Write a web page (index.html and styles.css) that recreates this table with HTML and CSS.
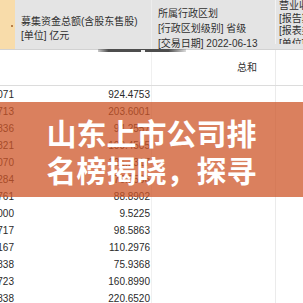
FILE: index.html
```html
<!DOCTYPE html>
<html lang="zh-CN">
<head>
<meta charset="utf-8">
<link rel="stylesheet" href="styles.css">
</head>
<body>
<div class="sheet">
  <div class="head">
    <div class="hc strip"><span class="dot"></span></div>
    <div class="hc hb">
      <div>募集资金总额(含股东售股)</div>
      <div>[单位] 亿元</div>
    </div>
    <div class="hc hcc">
      <div>所属行政区划</div>
      <div>[行政区划级别] 省级</div>
      <div>[交易日期] 2022-06-13</div>
    </div>
    <div class="hc hd">
      <div>营业收入</div>
      <div>[报告期] 2021年报</div>
      <div>[报表类型] 合并报表</div>
      <div>[单位] 亿元</div>
    </div>
    <div class="handle"><span class="knob"></span></div>
  </div>

  <div class="row sum">
    <div class="c"></div>
    <div class="c"></div>
    <div class="c cc total">总和</div>
    <div class="c cd"></div>
  </div>

  <div class="rows">
    <div class="row"><div class="c ca">5.4071</div><div class="c cb">924.4753</div><div class="c cc"></div><div class="c cd"></div></div>
    <div class="row"><div class="c ca">2.2713</div><div class="c cb">203.6001</div><div class="c cc"></div><div class="c cd"></div></div>
    <div class="row"><div class="c ca">1.5836</div><div class="c cb">94.2557</div><div class="c cc"></div><div class="c cd"></div></div>
    <div class="row"><div class="c ca">3.0821</div><div class="c cb">109.4505</div><div class="c cc"></div><div class="c cd"></div></div>
    <div class="row"><div class="c ca">0.6070</div><div class="c cb">121.1317</div><div class="c cc"></div><div class="c cd"></div></div>
    <div class="row"><div class="c ca">1.9284</div><div class="c cb">76.0536</div><div class="c cc"></div><div class="c cd"></div></div>
    <div class="row"><div class="c ca">2.4761</div><div class="c cb">88.8902</div><div class="c cc"></div><div class="c cd"></div></div>
    <div class="row"><div class="c ca">0.9000</div><div class="c cb">9.5225</div><div class="c cc"></div><div class="c cd"></div></div>
    <div class="row"><div class="c ca">1.7717</div><div class="c cb">98.5863</div><div class="c cc"></div><div class="c cd"></div></div>
    <div class="row"><div class="c ca">4.0167</div><div class="c cb">110.2976</div><div class="c cc"></div><div class="c cd"></div></div>
    <div class="row"><div class="c ca">2.8838</div><div class="c cb">75.9368</div><div class="c cc"></div><div class="c cd"></div></div>
    <div class="row"><div class="c ca">3.6723</div><div class="c cb">160.8990</div><div class="c cc"></div><div class="c cd"></div></div>
    <div class="row"><div class="c ca">5.0838</div><div class="c cb">220.6520</div><div class="c cc"></div><div class="c cd"></div></div>
  </div>

  <div class="banner">
    <span class="line">山东上市公司排</span>
    <span class="line">名榜揭晓，探寻</span>
  </div>
</div>
</body>
</html>
```

FILE: styles.css
```css
html, body {
  margin: 0;
  padding: 0;
  background: #ffffff;
}

body {
  width: 303px;
  height: 303px;
  overflow: hidden;
  font-family: "Liberation Sans", "Noto Sans CJK SC", sans-serif;
  color: #2a2a2a;
}

.sheet {
  position: relative;
  width: 303px;
  height: 303px;
  overflow: hidden;
}

.head {
  position: relative;
  display: grid;
  grid-template-columns: 15px 136px 124px 28px;
  height: 49px;
  background: #e4e4e4;
  border-bottom: 1px solid #d2d2d2;
  font-size: 10px;
  color: #303030;
}

.hc {
  overflow: hidden;
  white-space: nowrap;
}

.strip {
  background: #f8dcaa;
  position: relative;
}

.dot {
  position: absolute;
  left: 11px;
  top: 25px;
  width: 2px;
  height: 2px;
  border-radius: 50%;
  background: #a0602a;
}

.hb {
  padding: 15px 0 0 6px;
  line-height: 14px;
}

.hcc {
  border-left: 1px solid #ededed;
  padding: 6px 0 0 6px;
  line-height: 15px;
}

.hd {
  border-left: 1px solid #f3f3f3;
  padding: 0 0 0 3px;
  line-height: 12.5px;
  height: 44px;
}

.handle {
  position: absolute;
  left: 98px;
  top: 49px;
  width: 88px;
  height: 3px;
  background: linear-gradient(90deg, rgba(80,80,80,0.3), #4d4d4d 12%, #4d4d4d 80%, rgba(80,80,80,0.2));
}

.knob {
  position: absolute;
  left: 43px;
  top: 1px;
  width: 4px;
  height: 2px;
  background: #f2f2f2;
}

.row {
  display: grid;
  grid-template-columns: 15px 136px 124px 28px;
  height: 17px;
  line-height: 17px;
  font-size: 10px;
}

.row.sum {
  height: 35px;
  line-height: 36px;
  border-bottom: 1px solid #dcdcdc;
}

.c {
  overflow: hidden;
  white-space: nowrap;
}

.ca {
  text-align: right;
  padding-right: 1px;
  direction: ltr;
  display: flex;
  justify-content: flex-end;
}

.cb {
  text-align: right;
  padding-right: 1px;
}

.cc {
  border-left: 1px solid #f0f0f0;
}

.cd {
  border-left: 1px solid #ebebeb;
}

.total {
  padding-left: 85px;
  color: #333;
}

.banner {
  position: absolute;
  left: 0;
  top: 102px;
  width: 303px;
  height: 95px;
  box-sizing: border-box;
  padding-top: 12px;
  background: rgba(206, 86, 40, 0.75);
  color: #ffffff;
  font-family: "Noto Sans CJK SC", sans-serif;
  font-weight: 700;
  font-size: 30px;
  line-height: 37px;
  text-align: center;
}

.line {
  display: block;
}
```
